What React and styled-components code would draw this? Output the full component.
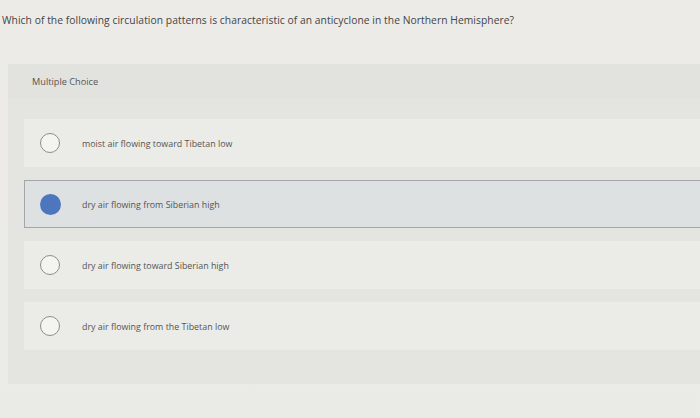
import React, { useState } from "react";
import styled, { createGlobalStyle } from "styled-components";

const GlobalStyle = createGlobalStyle`
  html, body {
    margin: 0;
    padding: 0;
    background: #ebebe7;
  }
  body {
    font-family: "Open Sans", Lato, sans-serif;
    color: #4a4a4a;
  }
`;

const choices = [
  "moist air flowing toward Tibetan low",
  "dry air flowing from Siberian high",
  "dry air flowing toward Siberian high",
  "dry air flowing from the Tibetan low",
];

function App() {
  const [picked, setPicked] = useState(1);

  return (
    <>
      <GlobalStyle />
      <Page>
        <Question>
          Which of the following circulation patterns is characteristic of an
          anticyclone in the Northern Hemisphere?
        </Question>
        <Panel>
          <PanelHeader>Multiple Choice</PanelHeader>
          <ChoiceList>
            {choices.map((text, i) => (
              <Choice
                key={text}
                $selected={picked === i}
                onClick={() => setPicked(i)}
              >
                <Radio $selected={picked === i} />
                <ChoiceText>{text}</ChoiceText>
              </Choice>
            ))}
          </ChoiceList>
        </Panel>
      </Page>
    </>
  );
}

export default App;

const Page = styled.div`
  width: 700px;
  height: 418px;
  overflow: hidden;
  background: linear-gradient(180deg, #ecebe8 0%, #eaeae6 100%);
  padding-top: 13px;
  box-sizing: border-box;
`;

const Question = styled.div`
  margin-left: 2px;
  font-size: 10.3px;
  line-height: 14px;
  color: #444;
  letter-spacing: 0.05px;
`;

const Panel = styled.div`
  margin: 37px 0 0 8px;
  background: #e4e4e0;
  padding: 0 0 34px 16px;
`;

const PanelHeader = styled.div`
  height: 35px;
  display: flex;
  align-items: center;
  margin-left: -16px;
  padding-left: 24px;
  font-size: 9.2px;
  color: #555;
  background: #e2e2de;
`;

const ChoiceList = styled.div`
  display: flex;
  flex-direction: column;
  gap: 13px;
  margin-top: 20px;
`;

const Choice = styled.div`
  height: 46px;
  display: flex;
  align-items: center;
  padding-left: 15px;
  background: ${(p) => (p.$selected ? "#dde1e2" : "#ebebe8")};
  border: 1px solid ${(p) => (p.$selected ? "#a2a5aa" : "transparent")};
  border-right: none;
  cursor: pointer;
`;

const Radio = styled.span`
  width: ${(p) => (p.$selected ? "21px" : "20px")};
  height: ${(p) => (p.$selected ? "21px" : "20px")};
  margin-right: ${(p) => (p.$selected ? "21px" : "22px")};
  border-radius: 50%;
  box-sizing: border-box;
  flex-shrink: 0;
  background: ${(p) => (p.$selected ? "#4d76bd" : "#f4f4f1")};
  border: ${(p) => (p.$selected ? "none" : "1.2px solid #8d8d8b")};
`;

const ChoiceText = styled.span`
  font-size: 8.9px;
  color: #555;
`;
